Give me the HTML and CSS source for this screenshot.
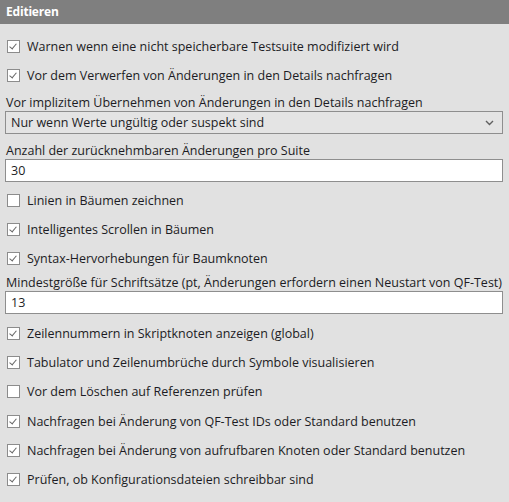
FILE: index.html
```html
<!DOCTYPE html>
<html lang="de">
<head>
<meta charset="utf-8">
<title>Editieren</title>
<link rel="stylesheet" href="styles.css">
</head>
<body>
<div class="header">Editieren</div>
<div class="content">
  <label class="cb-row"><span class="cb checked"></span><span>Warnen wenn eine nicht speicherbare Testsuite modifiziert wird</span></label>
  <label class="cb-row"><span class="cb checked"></span><span>Vor dem Verwerfen von Änderungen in den Details nachfragen</span></label>
  <div class="field-label first">Vor implizitem Übernehmen von Änderungen in den Details nachfragen</div>
  <div class="select"><span>Nur wenn Werte ungültig oder suspekt sind</span>
    <svg class="chev" width="9" height="6" viewBox="0 0 9 6"><path d="M1 1 L4.5 4.5 L8 1" fill="none" stroke="#606060" stroke-width="1.4"/></svg>
  </div>
  <div class="field-label">Anzahl der zurücknehmbaren Änderungen pro Suite</div>
  <div class="input">30</div>
  <label class="cb-row after-input"><span class="cb"></span><span>Linien in Bäumen zeichnen</span></label>
  <label class="cb-row"><span class="cb checked"></span><span>Intelligentes Scrollen in Bäumen</span></label>
  <label class="cb-row"><span class="cb checked"></span><span>Syntax-Hervorhebungen für Baumknoten</span></label>
  <div class="field-label second">Mindestgröße für Schriftsätze (pt, Änderungen erfordern einen Neustart von QF-Test)</div>
  <div class="input">13</div>
  <label class="cb-row after-input late"><span class="cb checked"></span><span>Zeilennummern in Skriptknoten anzeigen (global)</span></label>
  <label class="cb-row"><span class="cb checked"></span><span>Tabulator und Zeilenumbrüche durch Symbole visualisieren</span></label>
  <label class="cb-row"><span class="cb"></span><span>Vor dem Löschen auf Referenzen prüfen</span></label>
  <label class="cb-row tall"><span class="cb checked"></span><span>Nachfragen bei Änderung von QF-Test IDs oder Standard benutzen</span></label>
  <label class="cb-row"><span class="cb checked"></span><span>Nachfragen bei Änderung von aufrufbaren Knoten oder Standard benutzen</span></label>
  <label class="cb-row"><span class="cb checked"></span><span>Prüfen, ob Konfigurationsdateien schreibbar sind</span></label>
</div>
</body>
</html>
```
FILE: styles.css
```css
html, body {
  margin: 0;
  padding: 0;
  background: #e1e1e1;
  font-family: "Open Sans", "Noto Sans", sans-serif;
  font-size: 12.5px;
  color: #1c1c24;
}
.header {
  height: 24px;
  background: #7f7f7f;
  color: #fff;
  font-weight: bold;
  font-size: 12px;
  line-height: 24px;
  padding-left: 6px;
  letter-spacing: -0.2px;
}
.content {
  display: flex;
  flex-direction: column;
  padding: 8px 6px 0 5px;
}
.cb-row {
  height: 29px;
  display: flex;
  align-items: center;
  gap: 7px;
  padding-left: 2px;
}
.cb-row.after-input {
  margin-top: 4px;
}
.cb-row.late {
  margin-top: 5px;
}
.cb-row.tall {
  height: 30px;
}
.cb {
  width: 11px;
  height: 11px;
  border: 1px solid #8c8c8c;
  background: #fff;
  position: relative;
  flex: none;
}
.cb.checked::after {
  content: "";
  position: absolute;
  left: 3px;
  top: 1px;
  width: 3px;
  height: 6px;
  border-right: 1.5px solid #666;
  border-bottom: 1.5px solid #666;
  transform: rotate(40deg);
}
.field-label {
  line-height: 16px;
  margin-top: 9px;
  padding-left: 1px;
}
.field-label.first {
  margin-top: 5px;
}
.field-label.second {
  margin-top: 2px;
}
.select, .input {
  height: 21px;
  border: 1px solid #8e8e8e;
  display: flex;
  align-items: center;
  padding-left: 5px;
  padding-right: 8px;
  justify-content: space-between;
}
.select {
  background: #e4e4e4;
}
.input {
  background: #fff;
}
.chev {
  display: block;
}
```
